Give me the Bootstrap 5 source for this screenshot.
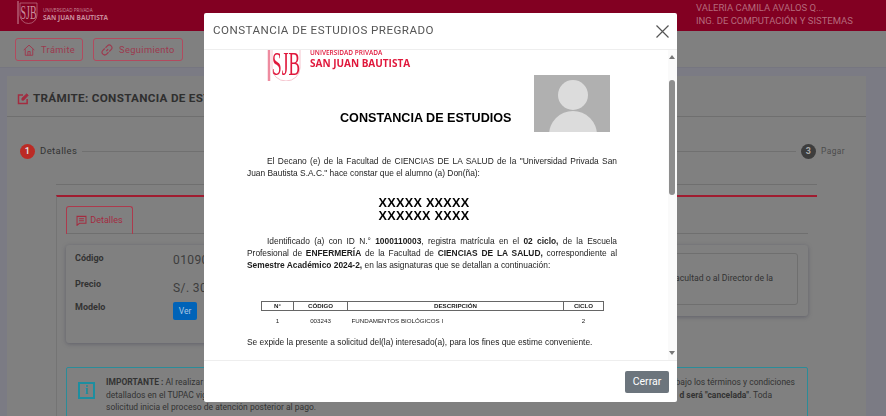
<!DOCTYPE html>
<html lang="es">
<head>
    <meta charset="UTF-8">
    <title>Constancia de estudios</title>
    <link rel="stylesheet" href="https://cdn.jsdelivr.net/npm/bootstrap@5.3.0/dist/css/bootstrap.min.css">
    <style>
        html, body { height: 416px; overflow: hidden; }
        body { background: #7b7b84; font-family: Roboto, sans-serif; color: #3c3c3c; }

        .franja-roja { background: #820022; height: 31px; padding-left: 15px; }
        .marca-textos { color: #c98b9b; line-height: 1; margin-left: 5px; font-family: "Open Sans", sans-serif; }
        .marca-textos div:first-child { font-size: 4.6px; margin-bottom: 2px; }
        .marca-textos div:last-child { font-size: 6.5px; font-weight: 700; }
        .usuario { width: 190px; font-size: 9.5px; line-height: 13px; color: #b5697c; padding-top: 1px; }

        .franja-botones { background: #808080; height: 37px; padding: 7px 15px 0; gap: 10px; border-bottom: 1px solid #767680; }
        .btn-tramite { height: 23px; font-size: 9.3px; letter-spacing: .35px; color: #9c3a4e; border: 1px solid #b24a5e; border-radius: 3px; padding: 0 7px; display: flex; align-items: center; gap: 6px; background: transparent; }

        .hoja { background: #808080; margin: 8px 20px 0 7px; height: 340px; }
        .hoja-titulo { height: 41px; border-bottom: 1px solid #6f6f6f; padding: 5px 0 0 10px; font-size: 11.7px; font-weight: 700; letter-spacing: .3px; color: #2f2f2f; gap: 4px; }
        .pasos { height: 67px; padding: 27px 21px 0 13px; font-size: 9.5px; letter-spacing: .4px; color: #333; align-items: flex-start; gap: 5px; }
        .paso-num { width: 15px; height: 15px; border-radius: 50%; font-size: 9px; font-weight: 700; color: #ddd; background: #bb2b25; display: flex; align-items: center; justify-content: center; flex: none; }
        .paso-num.gris { background: #3d3d3d; color: #aaa; }
        .paso-linea { flex: 1; border-top: 1px solid #707070; margin-top: 7px; }
        .paso-fin { font-size: 8.4px; color: #4c4c4c; margin-top: 1px; }
        .marco { margin: 0 49px; border-top: 1px solid #6f6f6f; padding-top: 10px; }
        .marco-rojo { border-top: 2px solid #a01c30; border-left: 1px solid #747474; padding: 9px 9px 0; }
        .pestana { width: 67px; height: 28px; border: 1px solid #ad3a4d; border-bottom: 0; border-radius: 3px 3px 0 0; color: #a32c40; font-size: 9px; gap: 3px; }
        .pestanas-borde { border-bottom: 1px solid #6f6f6f; height: 28px; }
        .datos { margin-top: 11px; height: 98px; }
        .datos-izq { width: 240px; box-shadow: 0 1px 4px rgba(60,60,80,.45); border-radius: 3px; padding: 7px 9px; font-size: 9px; }
        .datos-der { flex: 1; height: 71px; box-shadow: 0 1px 4px rgba(60,60,80,.45); border-radius: 3px; padding: 8px 10px 0 0; }
        .dato-fila { margin-bottom: 11px; }
        .dato-fila-b { margin-bottom: 6px; }
        .dato-etiqueta { width: 98px; font-weight: 700; color: #333; font-size: 9px; }
        .dato-valor { color: #3d3d3d; font-size: 12px; line-height: 14px; letter-spacing: .4px; margin-top: 1px; }
        .dato-precio { margin-top: 3px; }
        .btn-ver { background: #0063b8; color: #a9c6e2; font-size: 8.5px; width: 24px; height: 18px; border-radius: 2px; margin-top: 1px; }
        .datos-nota { height: 52px; border: 1px solid #6f6f6f; border-radius: 3px; font-size: 8.7px; color: #333; padding-right: 24px; }
        .aviso { margin-top: 24px; height: 60px; border: 1px solid #2b8c99; border-radius: 2px; font-size: 8.5px; line-height: 12.5px; color: #333; padding: 8px 12px 0 11px; gap: 11px; }
        .aviso-icono { width: 17px; height: 17px; border: 2px solid #1d8ea0; color: #1d8ea0; font-size: 12px; font-weight: 700; font-family: "Liberation Serif", serif; display: flex; align-items: center; justify-content: center; margin-top: 6px; flex: none; }
        .aviso-fin { padding-right: 23px; }

        .ventana { width: 473px; max-width: 473px; height: 389px; margin: 13px 0 0 204px; }
        .ventana .modal-content { height: 389px; border: 0; border-radius: 2px; }
        .ventana .modal-header { height: 37px; padding: 0 8px 0 9px; border-bottom: 1px solid #eee; flex: none; }
        .ventana .modal-title { font-size: 11.6px; letter-spacing: .45px; font-weight: 400; color: #555; }
        .ventana .modal-body { padding: 0; overflow: hidden; position: relative; }
        .ventana .modal-footer { height: 42px; padding: 0 8px; border-top: 1px solid #eee; flex: none; }
        .ventana .modal-footer > * { margin: 0; }
        .btn-cerrar { background: #6c757d; color: #fff; font-size: 10.5px; height: 22px; width: 44px; padding: 0; border-radius: 2px; border: 0; }
        .doc { width: 370px; margin-left: 43px; font-family: "Liberation Sans", sans-serif; color: #1c1c1c; font-size: 8.4px; line-height: 12px; }
        .doc-foto { width: 76px; height: 57px; margin: 25px 7px 0 0; flex: none; }
        .doc-marca { margin-left: 20px; color: #e0183c; font-family: "Open Sans", sans-serif; line-height: 1; }
        .doc-marca-a { font-size: 6.5px; font-weight: 600; }
        .doc-marca-b { font-size: 10px; font-weight: 700; margin-top: 1px; }
        .doc-titulo { font-size: 12.6px; font-weight: 700; color: #000; line-height: 16px; margin: 29px 0 0 93px; }
        .doc p { margin: 0; text-align: justify; text-indent: 20px; }
        .doc .doc-p1 { margin-top: 23px; }
        .doc-nombre { font-size: 12.6px; line-height: 13px; font-weight: 700; color: #000; text-align: center; margin: 18px 0 12px; padding-right: 16px; letter-spacing: .3px; }
        .doc-tabla { width: 343px; margin: 30px 0 0 14px; table-layout: fixed; font-size: 6.2px; line-height: 8px; border-collapse: collapse; }
        .doc-tabla th { border: 1px solid #666; text-align: center; padding: 0; font-weight: 700; }
        .doc-tabla td { text-align: center; padding: 6px 0 5px; }
        .doc .doc-cierre { margin-top: 6px; text-indent: 0; }
        .barra { position: absolute; right: 0; top: 0; bottom: 0; width: 9px; background: #fafafa; }
        .barra-flecha { position: absolute; left: 1px; border-left: 3px solid transparent; border-right: 3px solid transparent; }
        .barra-arriba { top: 5px; border-bottom: 4px solid #777; }
        .barra-abajo { bottom: 5px; border-top: 4px solid #777; }
        .barra-pulgar { position: absolute; left: 1px; top: 30px; width: 6px; height: 115px; background: #8e8e8e; border-radius: 3px; }
    </style>
</head>
<body>
    <div class="franja-roja d-flex justify-content-between align-items-start">
        <div class="d-flex align-items-center">
            <svg width="23" height="25" viewBox="0 0 23 25"><g fill="none" stroke="#c98b9b"><path d="M3 1V24" stroke-width="1"/><path d="M5 3H22V15A8.500 8.500 0 0 1 5 15Z" stroke-width=".6"/></g><text x="5.500" y="19" font-family="Liberation Serif" font-size="19" textLength="16" lengthAdjust="spacingAndGlyphs" fill="#c98b9b">SJB</text></svg>
            <div class="marca-textos pt-1"><div>UNIVERSIDAD PRIVADA</div><div>SAN JUAN BAUTISTA</div></div>
        </div>
        <div class="usuario">VALERIA CAMILA AVALOS Q...<br>ING. DE COMPUTACIÓN Y SISTEMAS</div>
    </div>
    <div class="franja-botones d-flex">
        <button class="btn-tramite">
            <svg width="12" height="12" viewBox="0 0 16 16" fill="none" stroke="#9c3a4e" stroke-width="1.300"><path d="M1 8 8 1.500 15 8M3 7V15H13V7M6.500 15V10H9.500V15"/></svg>Trámite
        </button>
        <button class="btn-tramite">
            <svg width="12" height="12" viewBox="0 0 16 16" fill="none" stroke="#9c3a4e" stroke-width="1.500"><path d="M7 9.500 9.500 7M6 5 8.500 2.500A3 3 0 0 1 13.500 7.500L11 10M10 11 7.500 13.500A3 3 0 0 1 2.500 8.500L5 6"/></svg>Seguimiento
        </button>
    </div>
    <div class="hoja">
        <div class="hoja-titulo d-flex align-items-center">
            <svg width="12" height="12" viewBox="0 0 16 16" fill="none" stroke="#a32c40" stroke-width="2"><path d="M8 2.500H2V14H13.500V8"/><path d="M6.500 9.500V7L13 1 15 3 9 9.500Z" fill="#a32c40" stroke-width="1"/></svg>
            TRÁMITE: CONSTANCIA DE ESTUDIOS PREGRADO
        </div>
        <div class="pasos d-flex">
            <span class="paso-num">1</span><span>Detalles</span><span class="paso-linea"></span>
            <span class="paso-num gris">3</span><span class="paso-fin">Pagar</span>
        </div>
        <div class="marco">
            <div class="marco-rojo">
                <div class="pestanas-borde">
                    <div class="pestana d-flex align-items-center justify-content-center">
                        <svg width="11" height="11" viewBox="0 0 16 16" fill="none" stroke="#a32c40" stroke-width="1.500"><path d="M1.500 2H14.500V12H5L1.500 15ZM4.500 5.500H11.500M4.500 8.500H11.500"/></svg>Detalles
                    </div>
                </div>
                <div class="datos d-flex">
                    <div class="datos-izq">
                        <div class="d-flex align-items-start dato-fila"><span class="dato-etiqueta">Código</span><span class="dato-valor">010902</span></div>
                        <div class="d-flex align-items-start dato-fila-b"><span class="dato-etiqueta">Precio</span><span class="dato-valor dato-precio">S/. 30.00</span></div>
                        <div class="d-flex align-items-start"><span class="dato-etiqueta">Modelo</span><span class="btn-ver d-flex align-items-center justify-content-center">Ver</span></div>
                    </div>
                    <div class="datos-der">
                        <div class="datos-nota d-flex align-items-center justify-content-end">Facultad o al Director de la</div>
                    </div>
                </div>
                <div class="aviso d-flex">
                    <span class="aviso-icono">i</span>
                    <div class="flex-grow-1">
                        <div class="d-flex justify-content-between"><span><b>IMPORTANTE :</b> Al realizar el pago</span><span>bajo los términos y condiciones</span></div>
                        <div class="d-flex justify-content-between"><span>detallados en el TUPAC vigente</span><span class="aviso-fin"><b>d será "cancelada"</b>. Toda</span></div>
                        <div>solicitud inicia el proceso de atención posterior al pago.</div>
                    </div>
                </div>
            </div>
        </div>
    </div>

    <div class="modal d-block" tabindex="-1">
        <div class="modal-dialog ventana">
            <div class="modal-content">
                <div class="modal-header">
                    <h5 class="modal-title">CONSTANCIA DE ESTUDIOS PREGRADO</h5>
                    <svg class="ms-auto" width="13" height="13" viewBox="0 0 13 13" stroke="#555" stroke-width="1.200"><path d="M.500 .500 12.500 12.500M12.500 .500 .500 12.500"/></svg>
                </div>
                <div class="modal-body">
                    <div class="doc">
                        <div class="d-flex justify-content-between">
                            <div class="flex-grow-1">
                                <div class="d-flex doc-marca">
                                    <svg width="43" height="31" viewBox="0 0 43 31"><path d="M2 0V31" stroke="#ee8ca0" stroke-width="2.500"/><path d="M5 0V18A14 13 0 0 0 33 18V0" fill="none" stroke="#f3b5c2" stroke-width=".8"/><text x="5" y="25" font-family="Liberation Serif" font-size="33" textLength="28" lengthAdjust="spacingAndGlyphs" fill="#e0183c">SJB</text></svg>
                                    <div>
                                        <div class="doc-marca-a">UNIVERSIDAD PRIVADA</div>
                                        <div class="doc-marca-b">SAN JUAN BAUTISTA</div>
                                    </div>
                                </div>
                                <div class="doc-titulo">CONSTANCIA DE ESTUDIOS</div>
                            </div>
                            <svg class="doc-foto" viewBox="0 0 76 57"><rect width="76" height="57" fill="#b0b0b0"/><circle cx="39" cy="20" r="15" fill="#dcdcdc"/><ellipse cx="39" cy="60" rx="24" ry="24" fill="#dcdcdc"/></svg>
                        </div>
                        <p class="doc-p1">El Decano (e) de la Facultad de CIENCIAS DE LA SALUD de la "Universidad Privada San Juan Bautista S.A.C." hace constar que el alumno (a) Don(ña):</p>
                        <div class="doc-nombre">XXXXX XXXXX<br>XXXXXX XXXX</div>
                        <p>Identificado (a) con ID N.° <b>1000110003</b>, registra matrícula en el <b>02 ciclo,</b> de la Escuela Profesional de <b>ENFERMERÍA</b> de la Facultad de <b>CIENCIAS DE LA SALUD,</b> correspondiente al <b>Semestre Académico 2024-2,</b> en las asignaturas que se detallan a continuación:</p>
                        <table class="doc-tabla">
                            <colgroup><col style="width:32px"><col style="width:54px"><col><col style="width:40px"></colgroup>
                            <tr><th>N°</th><th>CÓDIGO</th><th>DESCRIPCIÓN</th><th>CICLO</th></tr>
                            <tr><td>1</td><td>003243</td><td class="text-start ps-1">FUNDAMENTOS BIOLÓGICOS I</td><td>2</td></tr>
                        </table>
                        <p class="doc-cierre">Se expide la presente a solicitud del(la) interesado(a), para los fines que estime conveniente.</p>
                    </div>
                    <div class="barra"><span class="barra-flecha barra-arriba"></span><span class="barra-pulgar"></span><span class="barra-flecha barra-abajo"></span></div>
                </div>
                <div class="modal-footer">
                    <button type="button" class="btn btn-cerrar">Cerrar</button>
                </div>
            </div>
        </div>
    </div>
    <script src="https://cdn.jsdelivr.net/npm/bootstrap@5.3.0/dist/js/bootstrap.bundle.min.js"></script>
</body>
</html>
